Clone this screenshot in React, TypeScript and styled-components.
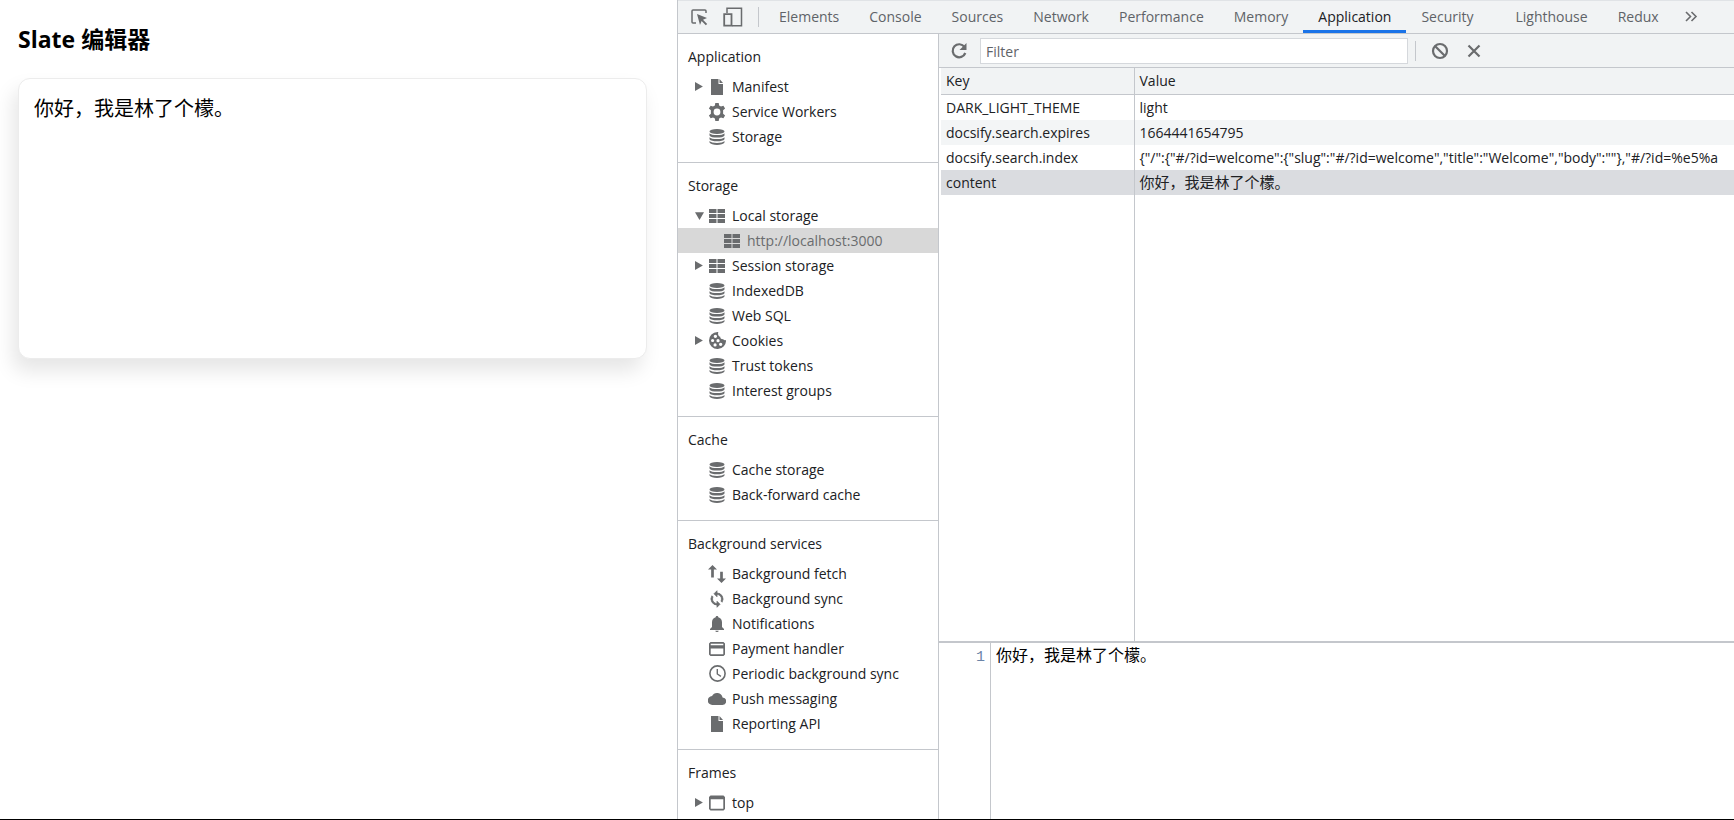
import React from 'react';
import styled, { createGlobalStyle, css } from 'styled-components';

const ink = '#202124';
const muted = '#5f6368';
const line = '#c4c7cc';
const bar = '#f1f3f4';

const GlobalStyle = createGlobalStyle`
  * { box-sizing: border-box; }
  body {
    margin: 0;
    background: #fff;
    color: ${ink};
    font-family: "Open Sans", "Noto Sans CJK SC", sans-serif;
    font-size: 14px;
    line-height: 25px;
  }
  button, input { font: inherit; color: inherit; }
`;

const Screen = styled.div`
  display: grid;
  grid-template-columns: minmax(0, 677fr) minmax(0, 1057fr);
  min-height: 100vh;
  border-bottom: 1px solid #000;
`;

const Page = styled.main`
  padding: 23px 30px 24px 18px;
`;

const Heading = styled.h1`
  margin: 0 0 23px;
  color: #000;
  font-size: 23px;
  line-height: 32px;
  font-weight: 700;
`;

const Editor = styled.div`
  height: 281px;
  padding: 15px;
  border: 1px solid #ececec;
  border-radius: 12px;
  background: #fff;
  box-shadow: -5px 12px 20px rgba(0, 0, 0, 0.1);
  color: #000;
  font-size: 20px;
  line-height: 30px;
  outline: none;
`;

const Devtools = styled.section`
  display: flex;
  flex-direction: column;
  min-width: 0;
  border-left: 1px solid ${line};
`;

const TabBar = styled.header`
  display: flex;
  height: 34px;
  overflow: hidden;
  padding-left: 6px;
  border-top: 1px solid #e0e3e6;
  border-bottom: 1px solid ${line};
  background: ${bar};
`;

const IconButton = styled.button<{ $width?: number }>`
  display: flex;
  flex: none;
  align-items: center;
  justify-content: center;
  width: ${(p) => p.$width ?? 34}px;
  padding: 0;
  border: 0;
  background: none;
  color: #6a6c6e;
`;

const Divider = styled.span<{ $gap: number }>`
  flex: none;
  align-self: center;
  width: 1px;
  height: 20px;
  margin: 0 ${(p) => p.$gap}px;
  background: ${line};
`;

const Tabs = styled.div`
  display: flex;
`;

const Tab = styled.button<{ $active?: boolean; $wide?: boolean }>`
  flex: none;
  padding: 2px ${(p) => (p.$wide ? 27 : 15)}px 0 15px;
  border: 0;
  border-bottom: 3px solid ${(p) => (p.$active ? '#1a73e8' : 'transparent')};
  background: none;
  color: ${(p) => (p.$active ? ink : muted)};
`;

const Body = styled.div`
  display: flex;
  flex: 1;
  min-height: 0;
`;

const Sidebar = styled.nav`
  flex: none;
  width: 261px;
  border-right: 1px solid ${line};
`;

const Section = styled.section`
  padding: 10px 0 13px;
  border-bottom: 1px solid ${line};
  &:last-child {
    border-bottom: 0;
    padding-bottom: 0;
  }
`;

const SectionTitle = styled.h2`
  margin: 0 0 5px;
  padding-left: 10px;
  font-size: 14px;
  line-height: 25px;
  font-weight: 400;
`;

const Tree = styled.ul`
  margin: 0;
  padding: 0;
  list-style: none;
`;

const TreeRow = styled.button<{ $nested?: boolean; $selected?: boolean }>`
  display: flex;
  align-items: center;
  width: 100%;
  height: 25px;
  padding: 0 0 0 ${(p) => (p.$nested ? 30 : 15)}px;
  border: 0;
  background: ${(p) => (p.$selected ? '#d8d8d8' : 'none')};
  color: ${(p) => (p.$selected ? '#6a6c6e' : ink)};
  text-align: left;
  white-space: nowrap;
  svg { flex: none; color: #6a6c6e; }
`;

const Caret = styled.span`
  display: flex;
  justify-content: center;
  width: 12px;
  margin-right: 3px;
`;

const IconSlot = styled.span`
  display: flex;
  align-items: center;
  justify-content: center;
  width: 18px;
`;

const RowLabel = styled.span`
  margin-left: 6px;
`;

const Content = styled.div`
  display: flex;
  flex: 1;
  flex-direction: column;
  min-width: 0;
`;

const Toolbar = styled.div`
  display: flex;
  height: 34px;
  border-bottom: 1px solid ${line};
  background: ${bar};
`;

const FilterBox = styled.input`
  flex: 0 1 428px;
  align-self: center;
  min-width: 0;
  height: 26px;
  margin-left: 1px;
  padding: 2px 5px 0;
  border: 1px solid #d5d8dc;
  background: #fff;
  outline: none;
  &::placeholder { color: ${muted}; opacity: 1; }
`;

const GridWrap = styled.div`
  display: flex;
  flex: 1;
  padding-left: 2px;
`;

const Grid = styled.table`
  width: 100%;
  table-layout: fixed;
  border-collapse: collapse;
`;

const KeyCol = styled.col`
  width: 193px;
`;

const cell = css`
  height: 25px;
  padding: 0 5px;
  overflow: hidden;
  font-weight: 400;
  text-align: left;
  white-space: nowrap;
  &:first-child { border-right: 1px solid ${line}; }
`;

const HeadCell = styled.th`
  ${cell}
  height: 26px;
  border-bottom: 1px solid ${line};
  background: ${bar};
`;

const Cell = styled.td<{ $large?: boolean }>`
  ${cell}
  ${(p) => p.$large && 'font-size: 15px;'}
`;

const DataRow = styled.tr<{ $selected?: boolean }>`
  height: 25px;
  background: #fff;
  &:nth-child(even) { background: #f3f5f6; }
  &:nth-child(n) { ${(p) => p.$selected && 'background: #dadce0;'} }
`;

const FillerRow = styled.tr`
  td { height: auto; }
`;

const Preview = styled.div`
  display: flex;
  height: 178px;
  border-top: 2px solid ${line};
`;

const Gutter = styled.div`
  width: 52px;
  padding: 2px 5px 0 0;
  border-right: 1px solid ${line};
  color: #6b84a8;
  font-family: "Liberation Mono", monospace;
  font-size: 15px;
  text-align: right;
`;

const Code = styled.pre`
  margin: 0;
  padding: 2px 5px;
  color: #000;
  font-family: "Liberation Mono", "Noto Sans CJK SC", monospace;
  font-size: 16px;
`;

const Svg = ({ size = 16, box = 16, children }: { size?: number; box?: number; children: React.ReactNode }) => (
  <svg width={size} height={size} viewBox={`0 0 ${box} ${box}`} fill="currentColor" aria-hidden="true">
    {children}
  </svg>
);

const icons = {
  file: (
    <Svg>
      <path d="M2 0h7.500v5H14v11H2z" />
      <path d="M10.500 0L14 4h-3.500z" />
    </Svg>
  ),
  gear: (
    <Svg size={18} box={18}>
      <path
        fillRule="evenodd"
        d="M7.300 0h3.400l.4 2.500 1.900 1.100 2.400-.9L17.100 5.600 15.100 7.300v3.400l2 1.700-1.700 2.900-2.400-.9-1.900 1.100-.4 2.500H7.300l-.4-2.500L5 14.400l-2.400.9L.9 12.400l2-1.700V7.300L.9 5.600l1.700-2.900 2.400.9 1.900-1.100zM9 5.600a3.400 3.400 0 100 6.800 3.400 3.400 0 000-6.800z"
      />
    </Svg>
  ),
  database: (
    <Svg>
      <ellipse cx="8" cy="2.500" rx="7.500" ry="2.500" />
      <path d="M.5 4.200C2 6.700 14 6.700 15.500 4.200v2.200C14 9.300 2 9.300 .5 6.400z" />
      <path d="M.5 8.200C2 10.700 14 10.700 15.500 8.200v2C14 13 2 13 .5 10.200z" />
      <path d="M.5 12C2 14.500 14 14.500 15.500 12v1.500C14 16.700 2 16.700 .5 13.500z" />
    </Svg>
  ),
  table: (
    <Svg>
      <path d="M0 1h7.500v4H0zM8.500 1H16v4H8.500zM0 6h7.500v4H0zM8.500 6H16v4H8.500zM0 11h7.500v4H0zM8.500 11H16v4H8.500z" />
    </Svg>
  ),
  cookie: (
    <Svg size={17}>
      <path
        fillRule="evenodd"
        d="M8 0a8 8 0 108 7.500c-1 .6-2.300.3-2.800-.8-1.500.3-2.700-.7-2.600-2.200C9 4.200 8 2.300 8.800.1zM6 2.500a1.600 1.600 0 110 3.200 1.600 1.600 0 010-3.200zM3.400 6.500a1.500 1.500 0 110 3 1.500 1.500 0 010-3zM8.500 6.700a1.500 1.500 0 110 3 1.500 1.500 0 010-3zM5.700 10.700a1.500 1.500 0 110 3 1.500 1.500 0 010-3zM11 10a1.600 1.600 0 110 3.200 1.600 1.600 0 010-3.200z"
      />
    </Svg>
  ),
  fetch: (
    <Svg size={18} box={16}>
      <path d="M4 0l4 4H5.200v7H2.800V4H0zM12 16l-4-4h2.800V6h2.400v6H16z" />
    </Svg>
  ),
  sync: (
    <Svg size={18} box={24}>
      <path
        d="M12 4V1L8 5l4 4V6c3.300 0 6 2.700 6 6 0 1-.3 2-.7 2.800l1.500 1.500A8 8 0 0012 4zm0 14c-3.300 0-6-2.700-6-6 0-1 .3-2 .7-2.800L5.200 7.700A8 8 0 0012 20v3l4-4-4-4z"
        stroke="currentColor"
        strokeWidth="1"
      />
    </Svg>
  ),
  bell: (
    <Svg>
      <path d="M8 0c.8 0 1.300.5 1.300 1.200 2.300.6 3.700 2.600 3.700 5V11l2 2v1H1v-1l2-2V6.200c0-2.400 1.400-4.400 3.700-5C6.700.5 7.200 0 8 0zM6.300 14.700h3.400a1.700 1.300 0 01-3.400 0z" />
    </Svg>
  ),
  card: (
    <Svg>
      <path fillRule="evenodd" d="M1.500 1h13L16 2.500v11L14.500 15h-13L0 13.500v-11zM1.700 2.700v1.500h12.600V2.700zM1.700 7.500v5.800h12.600V7.500z" />
    </Svg>
  ),
  clock: (
    <Svg size={17} box={17}>
      <circle cx="8.500" cy="8.500" r="7.600" fill="none" stroke="currentColor" strokeWidth="1.600" />
      <path d="M8.300 4v5l3.600 2.400" fill="none" stroke="currentColor" strokeWidth="1.400" />
    </Svg>
  ),
  cloud: (
    <Svg size={18} box={24}>
      <path d="M19.400 10A7.500 7.500 0 005.400 8 6 6 0 006 20h13a5 5 0 00.4-10z" />
    </Svg>
  ),
  frame: (
    <Svg>
      <path fillRule="evenodd" d="M1.500 .5h13L16 2v12l-1.500 1.500h-13L0 14V2zM1.700 4.200v9.600h12.600V4.200z" />
    </Svg>
  ),
};

type IconName = keyof typeof icons;
type Item = { icon: IconName; label: string; caret?: 'open' | 'closed'; nested?: boolean; selected?: boolean };

const sections: { title: string; items: Item[] }[] = [
  {
    title: 'Application',
    items: [
      { icon: 'file', label: 'Manifest', caret: 'closed' },
      { icon: 'gear', label: 'Service Workers' },
      { icon: 'database', label: 'Storage' },
    ],
  },
  {
    title: 'Storage',
    items: [
      { icon: 'table', label: 'Local storage', caret: 'open' },
      { icon: 'table', label: 'http://localhost:3000', nested: true, selected: true },
      { icon: 'table', label: 'Session storage', caret: 'closed' },
      { icon: 'database', label: 'IndexedDB' },
      { icon: 'database', label: 'Web SQL' },
      { icon: 'cookie', label: 'Cookies', caret: 'closed' },
      { icon: 'database', label: 'Trust tokens' },
      { icon: 'database', label: 'Interest groups' },
    ],
  },
  {
    title: 'Cache',
    items: [
      { icon: 'database', label: 'Cache storage' },
      { icon: 'database', label: 'Back-forward cache' },
    ],
  },
  {
    title: 'Background services',
    items: [
      { icon: 'fetch', label: 'Background fetch' },
      { icon: 'sync', label: 'Background sync' },
      { icon: 'bell', label: 'Notifications' },
      { icon: 'card', label: 'Payment handler' },
      { icon: 'clock', label: 'Periodic background sync' },
      { icon: 'cloud', label: 'Push messaging' },
      { icon: 'file', label: 'Reporting API' },
    ],
  },
  { title: 'Frames', items: [{ icon: 'frame', label: 'top', caret: 'closed' }] },
];

const tabs = [
  'Elements',
  'Console',
  'Sources',
  'Network',
  'Performance',
  'Memory',
  'Application',
  'Security',
  'Lighthouse',
  'Redux',
];

const rows = [
  ['DARK_LIGHT_THEME', 'light'],
  ['docsify.search.expires', '1664441654795'],
  ['docsify.search.index', '{"/":{"#/?id=welcome":{"slug":"#/?id=welcome","title":"Welcome","body":""},"#/?id=%e5%a'],
  ['content', '你好，我是林了个檬。'],
];

export default function App() {
  return (
    <>
      <GlobalStyle />
      <Screen>
        <Page>
          <Heading>Slate 编辑器</Heading>
          <Editor role="textbox" aria-label="Slate 编辑器" contentEditable suppressContentEditableWarning spellCheck={false}>
            你好，我是林了个檬。
          </Editor>
        </Page>
        <Devtools>
          <TabBar>
            <IconButton $width={29} aria-label="Inspect element">
              <Svg size={18} box={18}>
                <path d="M6 15H3a1 1 0 01-1-1V3a1 1 0 011-1h12a1 1 0 011 1v2" fill="none" stroke="currentColor" strokeWidth="1.500" />
                <path d="M7 6l10 4-4 1.700 4.200 4.200-1.400 1.400-4.200-4.200L10 17z" />
              </Svg>
            </IconButton>
            <IconButton $width={40} aria-label="Toggle device toolbar">
              <Svg size={20} box={20}>
                <path d="M4 6V1.200h14.500v17.500H9" fill="none" stroke="currentColor" strokeWidth="1.500" />
                <path d="M1.200 7.200h7.300v11.500H1.200z" fill="none" stroke="currentColor" strokeWidth="1.800" />
              </Svg>
            </IconButton>
            <Divider $gap={5} />
            <Tabs role="tablist">
              {tabs.map((t) => (
                <Tab key={t} role="tab" aria-selected={t === 'Application'} $active={t === 'Application'} $wide={t === 'Security'}>
                  {t}
                </Tab>
              ))}
            </Tabs>
            <IconButton aria-label="More tabs">
              <Svg size={14} box={14}>
                <path d="M2 2l4.500 4.500L2 11M7.500 2L12 6.500 7.500 11" fill="none" stroke="currentColor" strokeWidth="1.600" />
              </Svg>
            </IconButton>
          </TabBar>
          <Body>
            <Sidebar aria-label="Application">
              {sections.map((s) => (
                <Section key={s.title}>
                  <SectionTitle>{s.title}</SectionTitle>
                  <Tree>
                    {s.items.map((it) => (
                      <li key={it.label}>
                        <TreeRow $nested={it.nested} $selected={it.selected}>
                          <Caret>
                            {it.caret && (
                              <Svg size={9} box={8}>
                                {it.caret === 'open' ? <path d="M0 1h8L4 8z" /> : <path d="M0 0l7 4-7 4z" />}
                              </Svg>
                            )}
                          </Caret>
                          <IconSlot>{icons[it.icon]}</IconSlot>
                          <RowLabel>{it.label}</RowLabel>
                        </TreeRow>
                      </li>
                    ))}
                  </Tree>
                </Section>
              ))}
            </Sidebar>
            <Content>
              <Toolbar>
                <IconButton $width={40} aria-label="Refresh">
                  <Svg size={18} box={18}>
                    <path d="M14.500 5A6.500 6.500 0 1015.300 11" fill="none" stroke="currentColor" strokeWidth="2.200" />
                    <path d="M16.500 1v7H9.500z" />
                  </Svg>
                </IconButton>
                <FilterBox placeholder="Filter" aria-label="Filter" />
                <Divider $gap={7} />
                <IconButton aria-label="Clear all">
                  <Svg size={18} box={18}>
                    <path d="M4 4l10 10" stroke="currentColor" strokeWidth="2.200" />
                    <circle cx="9" cy="9" r="7" fill="none" stroke="currentColor" strokeWidth="2.200" />
                  </Svg>
                </IconButton>
                <IconButton aria-label="Delete selected">
                  <Svg size={14} box={14}>
                    <path d="M1.500 1.500l11 11M12.500 1.500l-11 11" stroke="currentColor" strokeWidth="2.200" />
                  </Svg>
                </IconButton>
              </Toolbar>
              <GridWrap>
                <Grid>
                  <colgroup>
                    <KeyCol />
                    <col />
                  </colgroup>
                  <thead>
                    <tr>
                      <HeadCell scope="col">Key</HeadCell>
                      <HeadCell scope="col">Value</HeadCell>
                    </tr>
                  </thead>
                  <tbody>
                    {rows.map(([k, v]) => (
                      <DataRow key={k} $selected={k === 'content'}>
                        <Cell>{k}</Cell>
                        <Cell $large={k === 'content'}>{v}</Cell>
                      </DataRow>
                    ))}
                    <FillerRow>
                      <Cell />
                      <Cell />
                    </FillerRow>
                  </tbody>
                </Grid>
              </GridWrap>
              <Preview>
                <Gutter>1</Gutter>
                <Code>你好，我是林了个檬。</Code>
              </Preview>
            </Content>
          </Body>
        </Devtools>
      </Screen>
    </>
  );
}
